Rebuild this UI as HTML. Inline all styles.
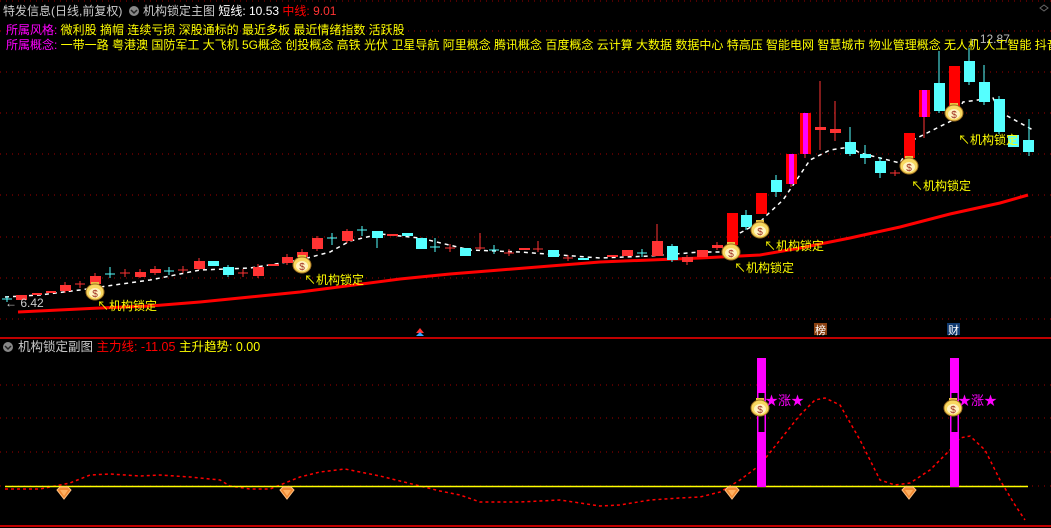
<!DOCTYPE html>
<html><head><meta charset="utf-8"><style>
html,body{margin:0;padding:0;background:#000;}
body{width:1051px;height:528px;overflow:hidden;position:relative;font-family:"Liberation Sans","Noto Sans CJK SC",sans-serif;}
.t{position:absolute;font-size:12px;line-height:14px;white-space:nowrap;}
svg{position:absolute;left:0;top:0;}
</style></head><body>
<svg width="1051" height="528" viewBox="0 0 1051 528">
<defs>
<g id="bag">
<rect x="-4" y="-11" width="8" height="3" fill="#e8c040"/>
<ellipse cx="0" cy="-1" rx="9" ry="8" fill="#f8d860" stroke="#a07020" stroke-width="1"/>
<ellipse cx="0" cy="0" rx="6" ry="5" fill="#fff4c0"/>
<text x="0" y="4" font-size="10" fill="#a03020" text-anchor="middle" font-family="Liberation Sans">$</text>
</g>
<g id="dia">
<polygon points="-7,-4 -4,-7 4,-7 7,-4 0,5" fill="#f08830" stroke="#ffc080" stroke-width="1"/>
<polygon points="-4,-4 4,-4 0,2" fill="#ffb060"/>
</g>
</defs>
<g stroke="#a00000" stroke-width="1" stroke-dasharray="1,5">
<line x1="0" y1="1" x2="1051" y2="1"/>
<line x1="0" y1="31" x2="1051" y2="31"/>
<line x1="0" y1="72" x2="1051" y2="72"/>
<line x1="0" y1="113" x2="1051" y2="113"/>
<line x1="0" y1="154" x2="1051" y2="154"/>
<line x1="0" y1="195" x2="1051" y2="195"/>
<line x1="0" y1="237" x2="1051" y2="237"/>
<line x1="0" y1="278" x2="1051" y2="278"/>
<line x1="0" y1="319" x2="1051" y2="319"/>
<line x1="0" y1="385" x2="1051" y2="385"/>
<line x1="0" y1="418" x2="1051" y2="418"/>
<line x1="0" y1="452" x2="1051" y2="452"/>
<line x1="0" y1="486" x2="1051" y2="486"/>
</g>
<line x1="0" y1="338" x2="1051" y2="338" stroke="#c00000" stroke-width="2"/>
<line x1="0" y1="526" x2="1051" y2="526" stroke="#c00000" stroke-width="2"/>
<polyline fill="none" stroke="#ff0000" stroke-width="3" points="18,312 100,308 150,306 200,302 250,297 300,292 400,279 450,274 500,270 600,262 700,258 760,255 800,248 850,238 900,227 950,214 1000,203 1028,195"/>
<polyline fill="none" stroke="#fff" stroke-width="1.5" stroke-dasharray="4,4" points="5,297 40,295 80,290 100,287 150,280 200,270 250,268 300,260 330,252 350,241 380,234 420,238 470,250 520,252 560,255 600,258 650,256 700,252 720,252 740,233 760,222 767,215 783,200 810,160 830,150 850,147 860,153 880,158 900,163 913,140 953,120 963,102 993,98 1000,112 1033,130"/>
<g stroke-width="1">
<g stroke="#5ff"><line x1="2" y1="299" x2="12" y2="299"/><line x1="7" y1="296" x2="7" y2="302"/></g>
<rect x="16" y="295" width="11" height="5" fill="#f33"/>
<rect x="32" y="293" width="10" height="2" fill="#f33"/>
<rect x="46" y="291" width="10" height="2" fill="#f33"/>
<g stroke="#f33"><line x1="65" y1="282" x2="65" y2="293"/></g><rect x="60" y="285" width="11" height="6" fill="#f33"/>
<g stroke="#f33"><line x1="75" y1="284" x2="85" y2="284"/><line x1="80" y1="281" x2="80" y2="288"/></g>
<g stroke="#f33"><line x1="95" y1="273" x2="95" y2="285"/></g><rect x="90" y="276" width="11" height="8" fill="#f33"/>
<g stroke="#5ff"><line x1="105" y1="274" x2="115" y2="274"/><line x1="110" y1="267" x2="110" y2="278"/></g>
<g stroke="#f33"><line x1="120" y1="273" x2="130" y2="273"/><line x1="125" y1="269" x2="125" y2="277"/></g>
<g stroke="#f33"><line x1="140" y1="269" x2="140" y2="278"/></g><rect x="135" y="272" width="11" height="5" fill="#f33"/>
<g stroke="#f33"><line x1="155" y1="266" x2="155" y2="275"/></g><rect x="150" y="269" width="11" height="4" fill="#f33"/>
<g stroke="#5ff"><line x1="164" y1="271" x2="174" y2="271"/><line x1="169" y1="267" x2="169" y2="275"/></g>
<g stroke="#f33"><line x1="178" y1="270" x2="188" y2="270"/><line x1="183" y1="266" x2="183" y2="273"/></g>
<g stroke="#f33"><line x1="199" y1="258" x2="199" y2="270"/></g><rect x="194" y="261" width="11" height="8" fill="#f33"/>
<rect x="208" y="261" width="11" height="5" fill="#5ff"/>
<g stroke="#5ff"><line x1="228" y1="265" x2="228" y2="277"/></g><rect x="223" y="267" width="11" height="8" fill="#5ff"/>
<g stroke="#f33"><line x1="238" y1="273" x2="248" y2="273"/><line x1="243" y1="269" x2="243" y2="277"/></g>
<g stroke="#f33"><line x1="258" y1="264" x2="258" y2="278"/></g><rect x="253" y="267" width="11" height="9" fill="#f33"/>
<rect x="268" y="264" width="11" height="2" fill="#f33"/>
<g stroke="#f33"><line x1="287" y1="254" x2="287" y2="265"/></g><rect x="282" y="257" width="11" height="6" fill="#f33"/>
<g stroke="#f33"><line x1="302" y1="249" x2="302" y2="259"/></g><rect x="297" y="252" width="11" height="5" fill="#f33"/>
<g stroke="#f33"><line x1="317" y1="236" x2="317" y2="251"/></g><rect x="312" y="238" width="11" height="11" fill="#f33"/>
<g stroke="#5ff"><line x1="327" y1="238" x2="337" y2="238"/><line x1="332" y1="233" x2="332" y2="245"/></g>
<g stroke="#f33"><line x1="347" y1="229" x2="347" y2="243"/></g><rect x="342" y="231" width="11" height="10" fill="#f33"/>
<g stroke="#5ff"><line x1="357" y1="230" x2="367" y2="230"/><line x1="362" y1="226" x2="362" y2="236"/></g>
<g stroke="#5ff"><line x1="377" y1="231" x2="377" y2="248"/></g><rect x="372" y="231" width="11" height="7" fill="#5ff"/>
<rect x="387" y="234" width="11" height="2" fill="#f33"/>
<rect x="402" y="233" width="11" height="3" fill="#5ff"/>
<rect x="416" y="238" width="11" height="11" fill="#5ff"/>
<g stroke="#5ff"><line x1="430" y1="247" x2="440" y2="247"/><line x1="435" y1="238" x2="435" y2="252"/></g>
<g stroke="#f33"><line x1="445" y1="248" x2="455" y2="248"/><line x1="450" y1="244" x2="450" y2="252"/></g>
<rect x="460" y="248" width="11" height="8" fill="#5ff"/>
<g stroke="#f33"><line x1="475" y1="248" x2="485" y2="248"/><line x1="480" y1="233" x2="480" y2="250"/></g>
<g stroke="#5ff"><line x1="489" y1="250" x2="499" y2="250"/><line x1="494" y1="245" x2="494" y2="254"/></g>
<g stroke="#f33"><line x1="504" y1="253" x2="514" y2="253"/><line x1="509" y1="249" x2="509" y2="256"/></g>
<rect x="519" y="248" width="11" height="2" fill="#f33"/>
<g stroke="#f33"><line x1="533" y1="249" x2="543" y2="249"/><line x1="538" y1="241" x2="538" y2="252"/></g>
<rect x="548" y="250" width="11" height="7" fill="#5ff"/>
<g stroke="#f33"><line x1="563" y1="258" x2="573" y2="258"/><line x1="568" y1="255" x2="568" y2="261"/></g>
<rect x="578" y="258" width="11" height="2" fill="#5ff"/>
<rect x="607" y="255" width="11" height="2" fill="#f33"/>
<rect x="622" y="250" width="11" height="6" fill="#f33"/>
<g stroke="#5ff"><line x1="637" y1="253" x2="647" y2="253"/><line x1="642" y1="249" x2="642" y2="257"/></g>
<g stroke="#f33"><line x1="657" y1="224" x2="657" y2="256"/></g><rect x="652" y="241" width="11" height="15" fill="#f33"/>
<g stroke="#5ff"><line x1="672" y1="244" x2="672" y2="262"/></g><rect x="667" y="246" width="11" height="14" fill="#5ff"/>
<g stroke="#f33"><line x1="687" y1="255" x2="687" y2="265"/></g><rect x="682" y="257" width="11" height="5" fill="#f33"/>
<rect x="697" y="250" width="11" height="7" fill="#f33"/>
<g stroke="#f33"><line x1="717" y1="242" x2="717" y2="250"/></g><rect x="712" y="245" width="11" height="3" fill="#f33"/>
<rect x="727" y="213" width="11" height="32" fill="#f00"/>
<g stroke="#5ff"><line x1="746" y1="210" x2="746" y2="230"/></g><rect x="741" y="215" width="11" height="12" fill="#5ff"/>
<rect x="756" y="193" width="11" height="21" fill="#f00"/>
<g stroke="#5ff"><line x1="776" y1="175" x2="776" y2="197"/></g><rect x="771" y="180" width="11" height="12" fill="#5ff"/>
<g stroke="#f33"><line x1="791" y1="184" x2="791" y2="187"/></g><rect x="786" y="154" width="11" height="30" fill="#f00"/><rect x="789" y="154" width="5" height="30" fill="#f0f"/>
<g stroke="#f33"><line x1="805" y1="154" x2="805" y2="158"/></g><rect x="800" y="113" width="11" height="41" fill="#f00"/><rect x="803" y="113" width="5" height="41" fill="#f0f"/>
<g stroke="#f33"><line x1="820" y1="81" x2="820" y2="150"/></g><rect x="815" y="127" width="11" height="3" fill="#f33"/>
<g stroke="#f33"><line x1="835" y1="101" x2="835" y2="141"/></g><rect x="830" y="129" width="11" height="4" fill="#f33"/>
<g stroke="#5ff"><line x1="850" y1="127" x2="850" y2="156"/></g><rect x="845" y="142" width="11" height="12" fill="#5ff"/>
<g stroke="#5ff"><line x1="865" y1="145" x2="865" y2="164"/></g><rect x="860" y="154" width="11" height="4" fill="#5ff"/>
<g stroke="#5ff"><line x1="880" y1="157" x2="880" y2="178"/></g><rect x="875" y="161" width="11" height="12" fill="#5ff"/>
<g stroke="#f33"><line x1="890" y1="173" x2="900" y2="173"/><line x1="895" y1="170" x2="895" y2="176"/></g>
<rect x="904" y="133" width="11" height="25" fill="#f00"/>
<g stroke="#f33"><line x1="924" y1="117" x2="924" y2="138"/></g><rect x="919" y="90" width="11" height="27" fill="#f00"/><rect x="922" y="90" width="5" height="27" fill="#f0f"/>
<g stroke="#5ff"><line x1="939" y1="51" x2="939" y2="113"/></g><rect x="934" y="83" width="11" height="28" fill="#5ff"/>
<rect x="949" y="66" width="11" height="41" fill="#f00"/>
<g stroke="#5ff"><line x1="969" y1="48" x2="969" y2="85"/></g><rect x="964" y="61" width="11" height="21" fill="#5ff"/>
<g stroke="#5ff"><line x1="984" y1="65" x2="984" y2="105"/></g><rect x="979" y="82" width="11" height="20" fill="#5ff"/>
<g stroke="#5ff"><line x1="999" y1="96" x2="999" y2="134"/></g><rect x="994" y="99" width="11" height="33" fill="#5ff"/>
<rect x="1008" y="135" width="11" height="12" fill="#5ff"/>
<g stroke="#5ff"><line x1="1029" y1="119" x2="1029" y2="156"/></g><rect x="1023" y="140" width="11" height="12" fill="#5ff"/>
</g>
<use href="#bag" x="95" y="293"/>
<use href="#bag" x="302" y="266"/>
<use href="#bag" x="731" y="253"/>
<use href="#bag" x="760" y="231"/>
<use href="#bag" x="909" y="167"/>
<use href="#bag" x="954" y="114"/>
<g font-size="12" fill="#ff0" font-family="Liberation Sans, Noto Sans CJK SC, sans-serif">
<text x="97" y="310">↖机构锁定</text>
<text x="304" y="284">↖机构锁定</text>
<text x="734" y="272">↖机构锁定</text>
<text x="764" y="250">↖机构锁定</text>
<text x="911" y="190">↖机构锁定</text>
<text x="958" y="144">↖机构锁定</text>
</g>
<text x="5" y="307" font-size="12" fill="#ccc" font-family="Liberation Sans">← 6.42</text>
<text x="968" y="43" font-size="12" fill="#bbb" font-family="Liberation Sans">┌ 12.87</text>
<polygon points="416,333 420,328 424,333" fill="#f33"/><polygon points="416,336 420,332 424,336" fill="#3af"/>
<rect x="814" y="323" width="13" height="12" fill="#8a4010"/><text x="815" y="334" font-size="11" fill="#fff" font-family="Noto Sans CJK SC">榜</text>
<rect x="947" y="323" width="13" height="12" fill="#103a70"/><text x="948" y="334" font-size="11" fill="#fff" font-family="Noto Sans CJK SC">财</text>
<polyline fill="none" stroke="#f00" stroke-width="1.5" stroke-dasharray="3,3" points="5,489 40,489 50,487 60,485 70,483 90,475 110,474 140,476 160,475 190,477 200,478 220,480 230,486 250,489 270,489 280,485 300,477 320,472 345,469 360,472 380,476 400,481 420,486 440,491 460,495 480,502 520,502 560,500 600,506 620,505 650,500 680,498 700,497 720,492 740,480 760,465 780,440 800,415 815,400 825,398 840,405 860,440 880,480 895,485 910,483 930,470 950,450 960,438 970,436 985,450 1000,480 1015,505 1025,520"/>
<line x1="5" y1="486.5" x2="1028" y2="486.5" stroke="#ff0" stroke-width="1.5"/>
<rect x="757" y="358" width="9" height="129" fill="#f0f"/>
<rect x="758.5" y="393" width="6" height="7" fill="#000"/><rect x="758.5" y="415" width="6" height="17" fill="#000"/>
<rect x="950" y="358" width="9" height="129" fill="#f0f"/>
<rect x="951.5" y="393" width="6" height="7" fill="#000"/><rect x="951.5" y="415" width="6" height="17" fill="#000"/>
<use href="#bag" x="760" y="409"/>
<use href="#bag" x="953" y="409"/>
<g font-size="13" fill="#f0f" font-family="Liberation Sans, Noto Sans CJK SC, sans-serif">
<text x="765" y="405">★涨★</text>
<text x="958" y="405">★涨★</text>
</g>
<use href="#dia" x="64" y="494"/>
<use href="#dia" x="287" y="494"/>
<use href="#dia" x="732" y="494"/>
<use href="#dia" x="909" y="494"/>
<circle cx="134" cy="11" r="5" fill="#888"/><path d="M131,10 l3,3 l3,-3" stroke="#222" stroke-width="1.5" fill="none"/>
<circle cx="8" cy="347" r="5" fill="#888"/><path d="M5,346 l3,3 l3,-3" stroke="#222" stroke-width="1.5" fill="none"/>
<path d="M1040,8 l4,-3 l4,3 l-4,3 z" stroke="#666" fill="none"/>
</svg>
<div class="t" style="left:3px;top:4px;color:#ccc">特发信息(日线,前复权)</div>
<div class="t" style="left:143px;top:4px;color:#ccc">机构锁定主图 <span style="color:#fff">短线: 10.53</span> <span style="color:#f00">中线: </span><span style="color:#f33">9.01</span></div>
<div class="t" style="left:6px;top:23px;color:#f0f">所属风格: <span style="color:#ff0">微利股 摘帽 连续亏损 深股通标的 最近多板 最近情绪指数 活跃股</span></div>
<div class="t" style="left:6px;top:38px;color:#f0f">所属概念: <span style="color:#ff0">一带一路 粤港澳 国防军工 大飞机 5G概念 创投概念 高铁 光伏 卫星导航 阿里概念 腾讯概念 百度概念 云计算 大数据 数据中心 特高压 智能电网 智慧城市 物业管理概念 无人机 人工智能 抖音</span></div>
<div class="t" style="left:18px;top:340px;color:#ccc;font-size:12.5px">机构锁定副图 <span style="color:#f00">主力线: -11.05</span> <span style="color:#ff0">主升趋势: 0.00</span></div>
</body></html>
